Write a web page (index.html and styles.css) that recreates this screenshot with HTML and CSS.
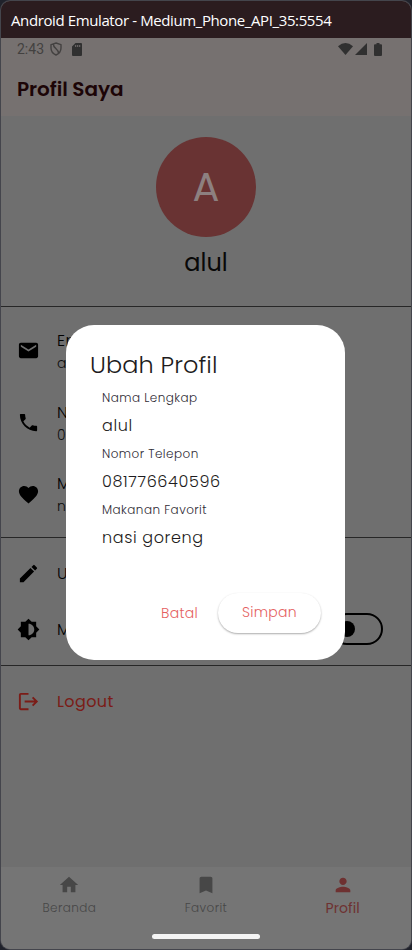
FILE: index.html
```
<!DOCTYPE html>
<html lang="id">
<head>
<meta charset="utf-8">
<title>Profil Saya</title>
<link rel="stylesheet" href="styles.css">
</head>
<body>
<div class="window">
  <div class="titlebar"><span>Android Emulator - Medium_Phone_API_35:5554</span></div>
  <header class="top">
    <div class="status">
      <span class="time">2:43</span>
      <svg class="shield" viewBox="0 0 12 14"><path d="M6 1 11 2.700V6c0 3.500-2 5.700-5 7C3 11.700 1 9.500 1 6V2.700zM3.500 2.500C3 6 8.500 7 8.500 11" fill="none" stroke="currentColor" stroke-width="1.400"/></svg>
      <svg class="sd" viewBox="0 0 10 13"><path fill="currentColor" fill-rule="evenodd" d="M3.500 0H9q1 0 1 1v11q0 1-1 1H1q-1 0-1-1V3.500zM3.200 2v2h1V2zM5.200 2v2h1V2zM7.200 2v2h1V2z"/></svg>
      <span class="spacer"></span>
      <svg class="wifi" viewBox="0 0 15 12"><path fill="currentColor" d="M0 3.200Q7.500-3 15 3.200L7.500 12z"/></svg>
      <svg class="signal" viewBox="0 0 12 12"><path fill="currentColor" d="M12 0V12H0z"/></svg>
      <svg class="battery" viewBox="0 0 8 13"><path fill="currentColor" d="M2.500 0h3v1.200H7q1 0 1 1V12q0 1-1 1H1q-1 0-1-1V2.200q0-1 1-1h1.500z"/></svg>
    </div>
    <h1>Profil Saya</h1>
  </header>
  <main>
    <section class="hero">
      <div class="avatar">A</div>
      <div class="name">alul</div>
    </section>
    <section class="info">
      <div class="row">
        <svg viewBox="0 0 24 24"><path d="M20 4H4c-1.100 0-2 .9-2 2v12c0 1.100.9 2 2 2h16c1.100 0 2-.9 2-2V6c0-1.100-.9-2-2-2zm0 4-8 5-8-5V6l8 5 8-5z"/></svg>
        <div><p>Em</p><small>a</small></div>
      </div>
      <div class="row">
        <svg viewBox="0 0 24 24"><path d="M6.620 10.790c1.440 2.830 3.760 5.140 6.590 6.590l2.200-2.200c.27-.27.67-.36 1.020-.24 1.120.37 2.330.57 3.570.57.55 0 1 .45 1 1V20c0 .55-.45 1-1 1C10.610 21 3 13.390 3 4c0-.55.45-1 1-1h3.500c.55 0 1 .45 1 1 0 1.250.2 2.450.57 3.570.11.35.03.74-.25 1.020z"/></svg>
        <div><p>N</p><small>0</small></div>
      </div>
      <div class="row">
        <svg viewBox="0 0 24 24"><path d="m12 21.350-1.450-1.320C5.400 15.360 2 12.280 2 8.500 2 5.420 4.420 3 7.500 3c1.740 0 3.410.81 4.500 2.090C13.090 3.810 14.760 3 16.500 3 19.580 3 22 5.420 22 8.500c0 3.780-3.400 6.860-8.550 11.540z"/></svg>
        <div><p>M</p><small>n</small></div>
      </div>
    </section>
    <section class="actions">
      <div class="row">
        <svg viewBox="0 0 24 24"><path d="M3 17.250V21h3.750L17.810 9.940l-3.750-3.750zM20.710 7.040c.39-.39.39-1.020 0-1.410l-2.340-2.340a1 1 0 0 0-1.410 0l-1.830 1.830 3.750 3.750z"/></svg>
        <p>U</p>
      </div>
      <div class="row">
        <svg viewBox="0 0 24 24"><path d="M20 15.310 23.310 12 20 8.690V4h-4.690L12 .69 8.690 4H4v4.690L.69 12 4 15.310V20h4.690L12 23.310 15.310 20H20zM12 18V6c3.310 0 6 2.690 6 6s-2.690 6-6 6z"/></svg>
        <p>M</p>
        <span class="spacer"></span>
        <span class="switch"><i></i></span>
      </div>
    </section>
    <section class="exit">
      <div class="row">
        <svg viewBox="0 0 24 24"><path d="m17 7-1.410 1.410L18.170 11H8v2h10.170l-2.580 2.580L17 17l5-5zM4 5h8V3H4c-1.100 0-2 .9-2 2v14c0 1.100.9 2 2 2h8v-2H4z"/></svg>
        <p>Logout</p>
      </div>
    </section>
  </main>
  <nav>
    <div><svg viewBox="0 0 24 24"><path d="M10 20v-6h4v6h5v-8h3L12 3 2 12h3v8z"/></svg><span>Beranda</span></div>
    <div><svg viewBox="0 0 24 24"><path d="M17 3H7c-1.100 0-2 .9-2 2v16l7-3 7 3V5c0-1.100-.9-2-2-2z"/></svg><span>Favorit</span></div>
    <div class="active"><svg viewBox="0 0 24 24"><path d="M12 12c2.210 0 4-1.790 4-4s-1.790-4-4-4-4 1.790-4 4 1.790 4 4 4zm0 2c-2.670 0-8 1.340-8 4v2h16v-2c0-2.660-5.330-4-8-4z"/></svg><span>Profil</span></div>
  </nav>
  <div class="home-pill"></div>
  <div class="dialog">
    <h2>Ubah Profil</h2>
    <dl>
      <dt>Nama Lengkap</dt><dd>alul</dd>
      <dt>Nomor Telepon</dt><dd>081776640596</dd>
      <dt>Makanan Favorit</dt><dd>nasi goreng</dd>
    </dl>
    <div class="buttons"><span class="cancel">Batal</span><span class="save">Simpan</span></div>
  </div>
</div>
</body>
</html>
```
FILE: styles.css
```
* { box-sizing: border-box; margin: 0; padding: 0; }
body {
  width: 412px; height: 950px; overflow: hidden; padding: 1px 1px 2px;
  background: #20222b;
  font-family: Poppins, Inter, "Open Sans", sans-serif;
  font-weight: 300;
}
svg { display: block; flex: none; fill: currentColor; }
.spacer { flex: 1; }
.window {
  position: relative; width: 410px; height: 948px; overflow: hidden;
  display: flex; flex-direction: column;
  border-radius: 9px; background: #6f6f6f;
  box-shadow: 0 0 0 1px #44454c;
}
.titlebar {
  height: 37px; flex: none; padding-left: 10px;
  background: #2b1c1f; color: #fff;
  font: 15px/38px "Open Sans", sans-serif; white-space: nowrap;
}
.titlebar span { letter-spacing: -0.39px; }
.top { height: 78px; flex: none; background: #767170; }
.status {
  height: 22px; display: flex; align-items: center; padding: 0 29px 0 16px; color: #303030;
}
.time { font: 14px/22px Roboto, sans-serif; color: #434140; width: 33px; }
.shield { width: 12px; height: 14px; color: #434140; }
.sd { width: 10px; height: 13px; margin-left: 10px; }
.wifi { width: 15px; height: 12px; }
.signal { width: 12px; height: 12px; margin-left: 2px; }
.battery { width: 8px; height: 13px; margin-left: 7px; }
h1 { padding-left: 16px; font-size: 20px; line-height: 58px; font-weight: 600; letter-spacing: -.06px; color: #1c0507; }
main { flex: 1; }
.hero { height: 191px; border-bottom: 1px solid #272727; display: flex; flex-direction: column; align-items: center; padding-top: 21px; }
.avatar {
  width: 100px; height: 100px; border-radius: 50%; background: #693333; color: #8d8080;
  font-size: 40px; line-height: 101px; text-align: center; font-weight: 400;
}
.name { font-size: 24px; line-height: 52px; color: #080808; font-weight: 400; }
.info { height: 231px; border-bottom: 1px solid #272727; padding: 8px 0; }
.info .row { height: 71.700px; }
.row { display: flex; align-items: center; padding: 0 28px 0 16px; color: #000; }
.row svg { width: 23px; height: 23px; margin-right: 17px; }
.row p { font-size: 16px; line-height: 24px; letter-spacing: .5px; white-space: nowrap; }
.row small { display: block; font-size: 14px; line-height: 20px; color: #0c0c0c; }
.actions { height: 128px; border-bottom: 1px solid #272727; padding: 8px 0; }
.actions .row, .exit .row { height: 56px; }
.actions svg, .exit svg { margin-top: -1px; }
.switch { width: 52px; height: 32px; border: 2px solid #000; border-radius: 16px; display: flex; align-items: center; padding-left: 6px; margin-top: -2px; }
.switch i { width: 16px; height: 16px; border-radius: 50%; background: #000; }
.exit { padding-top: 8px; }
.exit .row { color: #7b1c17; }
.exit p { font-weight: 400; letter-spacing: .4px; }
nav { height: 82px; flex: none; display: flex; background: #757575; color: #474747; padding-top: 7px; }
nav div { flex: 1; display: flex; flex-direction: column; align-items: center; }
nav svg { width: 22px; height: 22px; }
nav span { font-size: 12px; line-height: 24px; letter-spacing: .4px; }
nav .active { color: #6e3131; }
nav .active span { font-size: 14px; line-height: 24px; font-weight: 400; letter-spacing: .1px; }
.home-pill { position: absolute; left: 151px; top: 933px; width: 108px; height: 5px; border-radius: 3px; background: #f4f4f4; }
.dialog {
  position: absolute; left: 65px; top: 324px; width: 279px; height: 335px;
  border-radius: 28px; background: #fff; color: #1d1b20; padding: 24px;
}
h2 { font-size: 24px; line-height: 32px; font-weight: 300; height: 33px; letter-spacing: .1px; }
dl { padding-left: 12px; white-space: nowrap; }
dt { font-size: 12px; line-height: 31px; height: 28px; color: #302c36; letter-spacing: .45px; }
dd { font-size: 16px; line-height: 31px; height: 28px; letter-spacing: .62px; }
.buttons { display: flex; align-items: center; justify-content: flex-end; margin-top: 43px; height: 40px; font-size: 14px; color: #e55f5f; letter-spacing: .3px; }
.cancel { margin-right: 20px; }
.save { width: 103px; height: 40px; border-radius: 20px; line-height: 39px; text-align: center; box-shadow: 0 1px 2px #0005; }
```
